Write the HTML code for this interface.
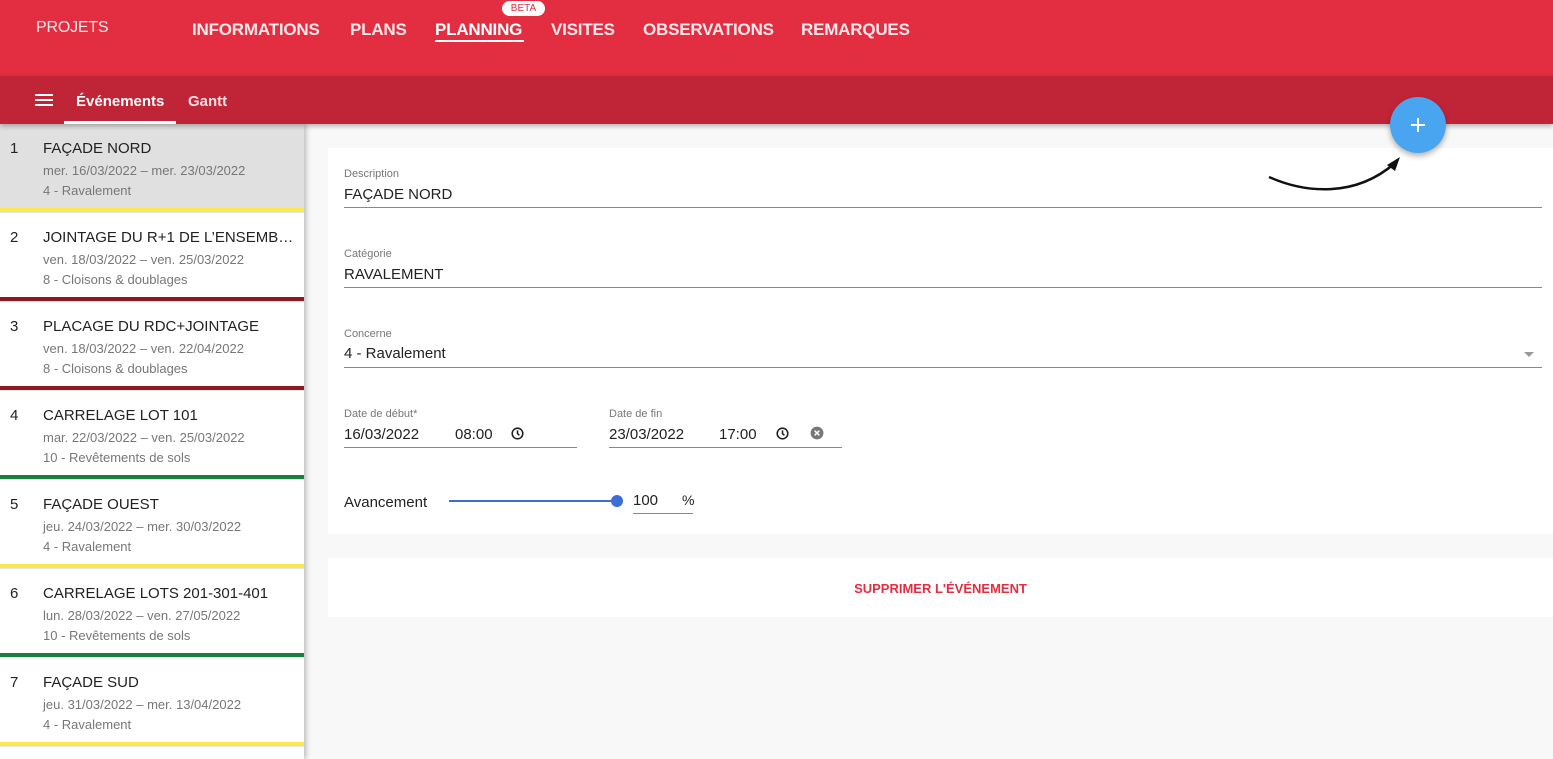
<!DOCTYPE html>
<html><head><meta charset="utf-8"><style>
*{box-sizing:border-box;margin:0;padding:0}
body{width:1553px;height:759px;overflow:hidden;background:#f8f8f8;font-family:"Liberation Sans",Arial,sans-serif;position:relative}
.top{position:absolute;left:0;top:0;width:1553px;height:76px;background:#e32d41;color:#fff}
.top span{position:absolute;top:20px;font-size:17px;font-weight:bold;color:#fde8ea;letter-spacing:-.2px}
.sub{position:absolute;left:0;top:76px;width:1553px;height:48px;background:#c02437;box-shadow:0 2px 5px rgba(0,0,0,.3);z-index:2}
.list{position:absolute;left:0;top:124px;width:304px;height:635px;background:#fff;box-shadow:2px 0 5px rgba(0,0,0,.25);overflow:hidden;z-index:1}
.it{position:absolute;left:0;width:304px;height:89px;border-bottom:1px solid #e6e6e6}
.it .n{position:absolute;left:10px;top:16px;font-size:15px;color:#222}
.it .t{position:absolute;left:43px;top:16px;font-size:15px;color:#222;white-space:nowrap}
.it .d{position:absolute;left:43px;top:39px;font-size:13px;color:#777}
.it .c{position:absolute;left:43px;top:59px;font-size:13px;color:#777}
.it .b{position:absolute;left:0;bottom:0;width:304px;height:4px}
.card{position:absolute;left:328px;width:1225px;background:#fff}
.lab{position:absolute;font-size:11px;color:#777}
.val{position:absolute;font-size:15px;color:#222}
.line{position:absolute;height:1px;background:#888}
</style></head><body>
<div class="top">
<span style="left:36px;font-weight:normal;font-size:16px;top:19px">PROJETS</span>
<span style="left:192px">INFORMATIONS</span>
<span style="left:350px">PLANS</span>
<span style="left:435px;color:#fff">PLANNING</span>
<div style="position:absolute;left:435px;top:40px;width:89px;height:2px;background:#fff"></div>
<div style="position:absolute;left:502px;top:1px;width:43px;height:15px;border-radius:8px;background:#fff;color:#e32d41;font-size:10px;text-align:center;line-height:15px">BETA</div>
<span style="left:551px">VISITES</span>
<span style="left:643px">OBSERVATIONS</span>
<span style="left:801px">REMARQUES</span>
</div>
<div class="sub">
<div style="position:absolute;left:35px;top:18px;width:18px;height:2px;background:#fff;box-shadow:0 5px 0 #fff,0 10px 0 #fff"></div>
<div style="position:absolute;left:76px;top:17px;color:#fff;font-size:15px;font-weight:bold">Événements</div>
<div style="position:absolute;left:64px;top:45px;width:112px;height:3px;background:#fff"></div>
<div style="position:absolute;left:188px;top:17px;color:#fde0e3;font-size:15px;font-weight:bold">Gantt</div>
</div>
<div style="position:absolute;left:1390px;top:97px;width:56px;height:56px;border-radius:50%;background:#4aa5f0;box-shadow:0 3px 6px rgba(0,0,0,.3);z-index:3">
<div style="position:absolute;left:21px;top:27px;width:14px;height:2px;background:#fff"></div><div style="position:absolute;left:27px;top:21px;width:2px;height:14px;background:#fff"></div></div>
<div class="list">
<div class="it" style="top:0;background:#e0e0e0"><span class="n">1</span><span class="t">FAÇADE NORD</span><span class="d">mer. 16/03/2022 – mer. 23/03/2022</span><span class="c">4 - Ravalement</span><div class="b" style="background:#fbe84a"></div></div>
<div class="it" style="top:89px"><span class="n">2</span><span class="t">JOINTAGE DU R+1 DE L’ENSEMB…</span><span class="d">ven. 18/03/2022 – ven. 25/03/2022</span><span class="c">8 - Cloisons &amp; doublages</span><div class="b" style="background:#8b1a22"></div></div>
<div class="it" style="top:178px"><span class="n">3</span><span class="t">PLACAGE DU RDC+JOINTAGE</span><span class="d">ven. 18/03/2022 – ven. 22/04/2022</span><span class="c">8 - Cloisons &amp; doublages</span><div class="b" style="background:#8b1a22"></div></div>
<div class="it" style="top:267px"><span class="n">4</span><span class="t">CARRELAGE LOT 101</span><span class="d">mar. 22/03/2022 – ven. 25/03/2022</span><span class="c">10 - Revêtements de sols</span><div class="b" style="background:#17803e"></div></div>
<div class="it" style="top:356px"><span class="n">5</span><span class="t">FAÇADE OUEST</span><span class="d">jeu. 24/03/2022 – mer. 30/03/2022</span><span class="c">4 - Ravalement</span><div class="b" style="background:#fbe84a"></div></div>
<div class="it" style="top:445px"><span class="n">6</span><span class="t">CARRELAGE LOTS 201-301-401</span><span class="d">lun. 28/03/2022 – ven. 27/05/2022</span><span class="c">10 - Revêtements de sols</span><div class="b" style="background:#17803e"></div></div>
<div class="it" style="top:534px"><span class="n">7</span><span class="t">FAÇADE SUD</span><span class="d">jeu. 31/03/2022 – mer. 13/04/2022</span><span class="c">4 - Ravalement</span><div class="b" style="background:#fbe84a"></div></div>
</div>
<div class="card" style="top:148px;height:386px"></div>
<div class="lab" style="left:344px;top:168px">Description</div>
<div class="val" style="left:344px;top:186px">FAÇADE NORD</div>
<div class="line" style="left:344px;top:207px;width:1198px"></div>
<div class="lab" style="left:344px;top:248px">Catégorie</div>
<div class="val" style="left:344px;top:266px">RAVALEMENT</div>
<div class="line" style="left:344px;top:287px;width:1198px"></div>
<div class="lab" style="left:344px;top:328px">Concerne</div>
<div class="val" style="left:344px;top:345px">4 - Ravalement</div>
<div style="position:absolute;left:1524px;top:352px;border:5px solid transparent;border-top-color:#999;border-bottom:0"></div>
<div class="line" style="left:344px;top:367px;width:1198px"></div>
<div class="lab" style="left:344px;top:408px">Date de début*</div>
<div class="val" style="left:344px;top:426px">16/03/2022</div>
<div class="val" style="left:455px;top:426px">08:00</div>
<svg style="position:absolute;left:510px;top:426px" width="15" height="15" viewBox="0 0 24 24"><circle cx="12" cy="12" r="8.5" fill="none" stroke="#222" stroke-width="2.5"/><path d="M12 7v5l3 3" fill="none" stroke="#222" stroke-width="2.5"/></svg>
<div class="line" style="left:344px;top:447px;width:233px"></div>
<div class="lab" style="left:609px;top:408px">Date de fin</div>
<div class="val" style="left:609px;top:426px">23/03/2022</div>
<div class="val" style="left:719px;top:426px">17:00</div>
<svg style="position:absolute;left:775px;top:426px" width="15" height="15" viewBox="0 0 24 24"><circle cx="12" cy="12" r="8.5" fill="none" stroke="#222" stroke-width="2.5"/><path d="M12 7v5l3 3" fill="none" stroke="#222" stroke-width="2.5"/></svg>
<svg style="position:absolute;left:810px;top:426px" width="14" height="14" viewBox="0 0 24 24"><circle cx="12" cy="12" r="11" fill="#777"/><path d="M8 8l8 8M16 8l-8 8" stroke="#fff" stroke-width="2.6"/></svg>
<div class="line" style="left:609px;top:447px;width:233px"></div>
<div class="val" style="left:344px;top:494px">Avancement</div>
<div style="position:absolute;left:449px;top:500px;width:168px;height:2px;background:#3b6fd4"></div>
<div style="position:absolute;left:611px;top:495px;width:12px;height:12px;border-radius:50%;background:#3b6fd4"></div>
<div class="val" style="left:633px;top:492px">100</div>
<div class="val" style="left:682px;top:492px;font-size:14px">%</div>
<div class="line" style="left:633px;top:513px;width:60px"></div>
<svg style="position:absolute;left:1265px;top:153px" width="140" height="45"><path d="M4 24 C40 40 90 45 130 10" fill="none" stroke="#111" stroke-width="2.5"/><path d="M122 12 L135 4 L130 18 Z" fill="#111"/></svg>
<div class="card" style="top:558px;height:59px"></div>
<div style="position:absolute;left:328px;width:1225px;top:581px;text-align:center;font-size:13px;font-weight:bold;color:#e32d41">SUPPRIMER L'ÉVÉNEMENT</div>
</body></html>
